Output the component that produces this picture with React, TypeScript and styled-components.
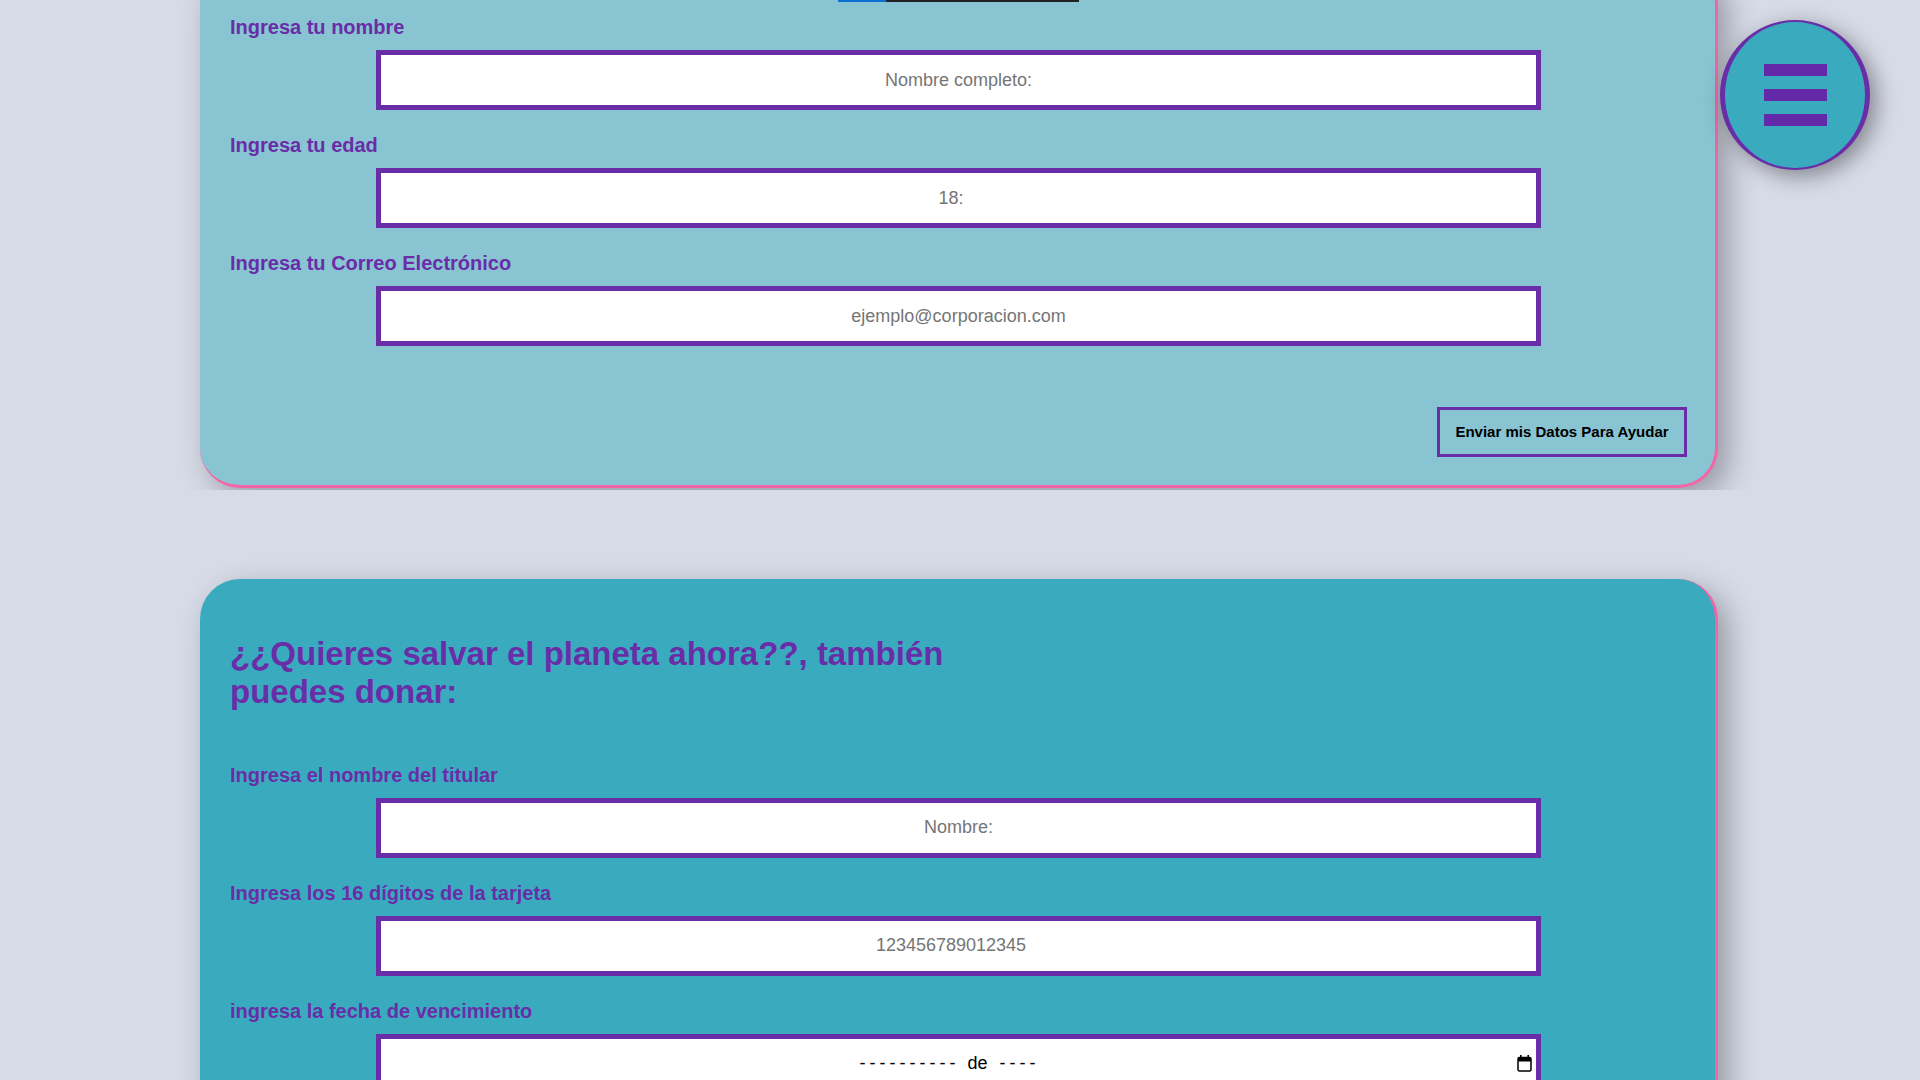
import styled, { createGlobalStyle } from "styled-components";

const GlobalStyle = createGlobalStyle`
  *, *::before, *::after {
    box-sizing: border-box;
  }

  html, body {
    margin: 0;
    padding: 0;
  }

  body {
    background: #d7dbe7;
    font-family: "Liberation Sans", Arial, Helvetica, sans-serif;
    overflow: hidden;
  }
`;

const Page = styled.main`
  margin-top: -36.5px;
`;

const Section = styled.section<{ $clip?: boolean }>`
  padding: ${(p) => (p.$clip ? "0 0 2px 200px" : "89.5px 0 60px 200px")};
  overflow: ${(p) => (p.$clip ? "hidden" : "visible")};
`;

const Card = styled.div<{ $tone: "light" | "deep" }>`
  width: 1518px;
  padding: 30px 28px 28px 30px;
  background: ${(p) => (p.$tone === "light" ? "#89c4d2" : "#3aabbf")};
  border-right: 3px solid #f364a8;
  border-bottom: 3px solid #f364a8;
  border-radius: 40px;
  box-shadow: 10px 10px 30px rgba(0, 0, 0, 0.3);
`;

const Meter = styled.div`
  width: 241px;
  height: 8px;
  margin: 0 auto 14.5px;
  background: #222;
  overflow: hidden;
`;

const MeterFill = styled.div`
  height: 100%;
  background: #0a6fd0;
`;

const Heading = styled.h2`
  width: 50%;
  margin: 26px 0 52.5px;
  font-size: 33px;
  line-height: 38px;
  font-weight: 700;
  color: #6a2da8;
`;

const Field = styled.div`
  display: flex;
  flex-direction: column;
`;

const Label = styled.label`
  display: block;
  margin: 0 0 11px;
  font-size: 20px;
  line-height: 23px;
  font-weight: 700;
  color: #6a2da8;
`;

const TextInput = styled.input`
  display: block;
  width: 80%;
  height: 60px;
  margin: 0 auto 24px;
  padding: 0 2px;
  border: 5px solid #6a2da8;
  border-radius: 0;
  background: #fff;
  font-family: "Liberation Sans", Arial, sans-serif;
  font-size: 18px;
  color: #333;
  text-align: center;
  outline: none;

  &::placeholder {
    color: #757575;
  }
`;

const DateBox = styled.div`
  display: flex;
  align-items: center;
  width: 80%;
  height: 60px;
  margin: 0 auto 24px;
  padding: 0 4px 0 1px;
  border: 5px solid #6a2da8;
  background: #fff;
  font-size: 18px;
  color: #000;
`;

const DateText = styled.span`
  flex: 1;
  text-align: center;
  white-space: pre;
`;

const Dashes = styled.span`
  letter-spacing: 4px;
`;

const Connector = styled.span`
  padding: 0 7px 0 3px;
`;

const CalendarIcon = styled.svg`
  flex: none;
`;

const ButtonRow = styled.div`
  display: flex;
  justify-content: flex-end;
  margin-top: 36.5px;
`;

const SubmitButton = styled.button`
  width: 250px;
  height: 50px;
  border: 3px solid #6a2da8;
  background: transparent;
  font-family: "Liberation Sans", Arial, sans-serif;
  font-size: 15px;
  font-weight: 700;
  color: #000;
  cursor: pointer;
`;

const MenuButton = styled.button`
  position: fixed;
  top: 20px;
  right: 50px;
  width: 150px;
  height: 150px;
  display: flex;
  flex-direction: column;
  align-items: center;
  justify-content: center;
  gap: 13px;
  padding: 0;
  border: 2px solid #6a2da8;
  border-left-width: 5px;
  border-right-width: 5px;
  border-radius: 50%;
  background: #3aabbf;
  box-shadow: 6px 6px 22px rgba(0, 0, 0, 0.4);
  cursor: pointer;
`;

const Bar = styled.span`
  display: block;
  width: 63px;
  height: 12px;
  background: #6429a8;
`;

const App = () => {
  return (
    <>
      <GlobalStyle />
      <Page>
        <Section $clip>
          <Card $tone="light">
            <Meter>
              <MeterFill style={{ width: `${(48 / 241) * 100}%` }} />
            </Meter>
            <Field>
              <Label htmlFor="nombre">Ingresa tu nombre</Label>
              <TextInput id="nombre" type="text" placeholder="Nombre completo:" />
            </Field>
            <Field>
              <Label htmlFor="edad">Ingresa tu edad</Label>
              <TextInput id="edad" type="number" placeholder="18:" />
            </Field>
            <Field>
              <Label htmlFor="correo">Ingresa tu Correo Electrónico</Label>
              <TextInput
                id="correo"
                type="email"
                placeholder="ejemplo@corporacion.com"
              />
            </Field>
            <ButtonRow>
              <SubmitButton type="button">Enviar mis Datos Para Ayudar</SubmitButton>
            </ButtonRow>
          </Card>
        </Section>

        <Section>
          <Card $tone="deep">
            <Heading>¿¿Quieres salvar el planeta ahora??, también puedes donar:</Heading>
            <Field>
              <Label htmlFor="titular">Ingresa el nombre del titular</Label>
              <TextInput id="titular" type="text" placeholder="Nombre:" />
            </Field>
            <Field>
              <Label htmlFor="tarjeta">Ingresa los 16 dígitos de la tarjeta</Label>
              <TextInput id="tarjeta" type="number" placeholder="123456789012345" />
            </Field>
            <Field>
              <Label>ingresa la fecha de vencimiento</Label>
              <DateBox>
                <DateText>
                  <Dashes>----------</Dashes> <Connector>de</Connector> <Dashes>----</Dashes>
                </DateText>
                <CalendarIcon width="15" height="17" viewBox="0 0 15 17">
                  <rect x="1" y="2.5" width="13" height="13.5" rx="1.5" fill="#fff" stroke="#000" strokeWidth="1.5" />
                  <rect x="1" y="2.5" width="13" height="4" fill="#000" />
                  <rect x="3" y="0" width="1.6" height="3" fill="#000" />
                  <rect x="10.4" y="0" width="1.6" height="3" fill="#000" />
                </CalendarIcon>
              </DateBox>
            </Field>
            <ButtonRow>
              <SubmitButton type="button">Donar</SubmitButton>
            </ButtonRow>
          </Card>
        </Section>
      </Page>

      <MenuButton type="button" aria-label="Menú">
        <Bar />
        <Bar />
        <Bar />
      </MenuButton>
    </>
  );
};

export default App;
